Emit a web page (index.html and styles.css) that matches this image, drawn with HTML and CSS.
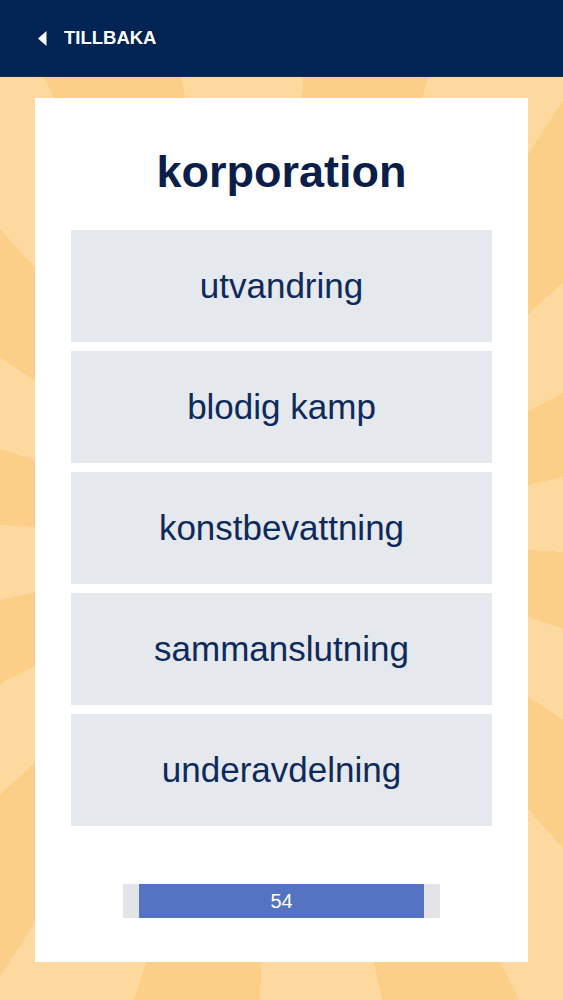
FILE: index.html
```html
<!DOCTYPE html>
<html lang="sv">
    <head>
        <meta charset="UTF-8" />
        <meta name="viewport" content="width=device-width, initial-scale=1.0" />
        <title>korporation</title>
        <link rel="stylesheet" href="styles.css">
    </head>

    <body>
        <header class="topbar">
            <a class="back" href="#">
                <svg class="back-icon" width="9" height="15" viewBox="0 0 9 15">
                    <polygon points="8.5,0 8.5,15 0,7.5" fill="#fff" />
                </svg>
                <span>TILLBAKA</span>
            </a>
        </header>

        <section class="stage">
            <div class="card">
                <h1 class="word">korporation</h1>
                <ul class="choices">
                    <li>utvandring</li>
                    <li>blodig kamp</li>
                    <li>konstbevattning</li>
                    <li>sammanslutning</li>
                    <li>underavdelning</li>
                </ul>
                <div class="timer">
                    <div class="timer-fill">54</div>
                </div>
            </div>
        </section>
    </body>
</html>
```

FILE: styles.css
```css
* {
    margin: 0;
    padding: 0;
    box-sizing: border-box;
}

html, body {
    height: 100%;
}

body {
    font-family: "Liberation Sans", Arial, sans-serif;
    display: flex;
    flex-direction: column;
    background: #fdd89d;
}

li {
    list-style-type: none;
}

.topbar {
    height: 77px;
    background: #012454;
    display: flex;
    align-items: center;
    padding-left: 38px;
    border-bottom: 1px solid #0c2a4a;
}

.back {
    display: flex;
    align-items: center;
    gap: 17px;
    color: #fff;
    text-decoration: none;
    font-weight: bold;
    font-size: 18.5px;
}

/* sunburst behind the card */
.stage {
    flex: 1;
    padding: 21px 35px 38px;
    background: repeating-conic-gradient(from 2.7deg at 50% 50%,
        #fccf89 0deg 15deg,
        #fdd99f 15deg 30deg);
}

.card {
    background: #fff;
    height: 864px;
    padding: 0 36px;
    display: flex;
    flex-direction: column;
    align-items: stretch;
}

.word {
    font-size: 45px;
    font-weight: bold;
    color: #0b1e4a;
    text-align: center;
    line-height: 52px;
    padding-top: 48px;
    margin-bottom: 32px;
}

.choices {
    display: flex;
    flex-direction: column;
    gap: 9px;
}

.choices li {
    height: 112px;
    background: #e5e8ec;
    color: #0e2a5a;
    font-size: 35px;
    display: flex;
    align-items: center;
    justify-content: center;
}

.timer {
    align-self: center;
    width: 317px;
    height: 34px;
    margin-top: 58px;
    padding: 0 16px;
    background: #e2e4e8;
}

.timer-fill {
    height: 100%;
    background: #5473c2;
    color: #fff;
    font-size: 20px;
    display: flex;
    align-items: center;
    justify-content: center;
}
```
